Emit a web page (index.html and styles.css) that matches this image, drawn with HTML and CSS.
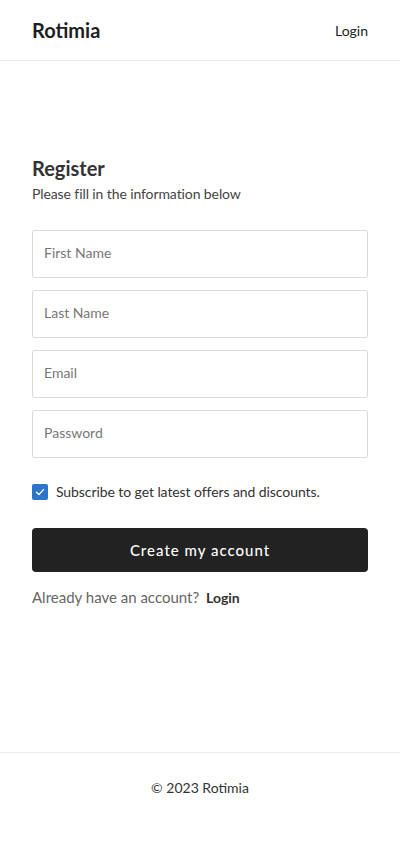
FILE: index.html
```html
<!DOCTYPE html>
<html lang="en">
<head>
    <meta charset="UTF-8">
    <meta name="viewport" content="width=device-width, initial-scale=1.0">
    <link rel="stylesheet" href="styles.css">
</head>
<body>
    <header class="site-header">
        <div class="logo">Rotimia</div>
        <a class="header-link" href="#">Login</a>
    </header>

    <main class="page">
        <form class="register-form">
            <h2>Register</h2>
            <p class="subtitle">Please fill in the information below</p>

            <input type="text" placeholder="First Name">
            <input type="text" placeholder="Last Name">
            <input type="email" placeholder="Email">
            <input type="password" placeholder="Password">

            <label class="subscribe">
                <span class="check">
                    <svg width="12" height="12" viewBox="0 0 12 12"><path d="M2.5 6.2l2.4 2.4 4.6-5" fill="none" stroke="#fff" stroke-width="1.4" stroke-linecap="round" stroke-linejoin="round"/></svg>
                </span>
                Subscribe to get latest offers and discounts.
            </label>

            <button type="submit">Create my account</button>

            <p class="switch">Already have an account? <a href="#">Login</a></p>
        </form>
    </main>

    <footer class="site-footer">© 2023 Rotimia</footer>
</body>
</html>
```

FILE: styles.css
```css
* {
    box-sizing: border-box;
}
body {
    font-family: 'Lato', sans-serif;
    margin: 0;
    padding: 0;
    background: #ffffff;
    color: #222;
    display: flex;
    flex-direction: column;
    min-height: 850px;
}
.site-header {
    height: 61px;
    padding: 0 32px;
    display: flex;
    justify-content: space-between;
    align-items: center;
    border-bottom: 1px solid #ebebeb;
}
.logo {
    font-size: 20px;
    font-weight: bold;
    color: #1f1f1f;
}
.header-link {
    font-size: 14px;
    color: #222;
    text-decoration: none;
}
.page {
    flex: 1;
    padding: 94px 32px 0;
}
.register-form h2 {
    margin: 0;
    font-size: 20px;
    font-weight: bold;
    color: #333;
    line-height: 26px;
}
.subtitle {
    margin: 4px 0 27px;
    font-size: 14px;
    color: #444;
    line-height: 18px;
    letter-spacing: -0.1px;
}
.register-form input {
    display: block;
    width: 100%;
    height: 48px;
    margin-bottom: 12px;
    padding: 0 11px 4px;
    border: 1px solid #d9d9d9;
    border-radius: 3px;
    font-family: 'Lato', sans-serif;
    font-size: 14px;
    color: #222;
}
.register-form input::placeholder {
    color: #777;
}
.subscribe {
    display: flex;
    align-items: center;
    gap: 8px;
    margin-top: 25px;
    font-size: 14px;
    letter-spacing: -0.08px;
    color: #333;
}
.check {
    width: 16px;
    height: 16px;
    border-radius: 2px;
    background: #2a75c9;
    display: flex;
    align-items: center;
    justify-content: center;
}
.register-form button {
    display: block;
    width: 100%;
    height: 44px;
    margin-top: 28px;
    border: none;
    border-radius: 4px;
    background: #222222;
    color: #fff;
    font-family: 'Lato', sans-serif;
    font-size: 15px;
    font-weight: 500;
    letter-spacing: 1px;
    cursor: pointer;
}
.switch {
    margin: 16px 0 0;
    font-size: 15px;
    color: #666;
}
.switch a {
    margin-left: 3px;
    font-size: 14px;
    font-weight: bold;
    color: #333;
    text-decoration: none;
}
.site-footer {
    height: 98px;
    border-top: 1px solid #ebebeb;
    padding-top: 26px;
    text-align: center;
    font-size: 14px;
    color: #333;
}
```
